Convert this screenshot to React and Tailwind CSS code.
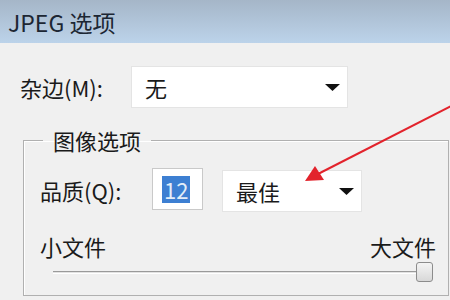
import React from 'react'

const DownArrow = () => (
    <svg width="15" height="7" viewBox="0 0 15 7" className="shrink-0">
        <polygon points="0,0 15,0 7.5,7" fill="#111" />
    </svg>
)

const Combo = ({ value, className }) => (
    <div
        className={`flex items-center justify-between h-[42px] bg-white border border-[#e4e4e4] pl-[13px] pr-[7px] ${className}`}>
        <span>{value}</span>
        <DownArrow />
    </div>
)

export default function App() {
    return (
        <div className="relative w-[450px] h-[300px] overflow-hidden bg-[#f0f0f0] text-[22px] leading-[28px] text-[#1a1a1a] font-['Noto_Sans_CJK_SC',sans-serif]">
            {/* title bar */}
            <div className="h-[43px] flex items-center pl-[8px] bg-gradient-to-b from-[#a5b6c8] to-[#bcd3ea] text-[23px] text-[#1c2633]">
                JPEG 选项
            </div>

            {/* matte */}
            <div className="flex items-center mt-[23px] pl-[20px]">
                <span className="w-[111px]">杂边(M):</span>
                <Combo value="无" className="w-[217px]" />
            </div>

            {/* image options group */}
            <fieldset className="ml-[23px] mt-[18px] w-[426px] border border-[#b0b0b0] pl-[16px] pr-[12px] pt-[14px] pb-[13px] shadow-[inset_1px_1px_0_#ffffff]">
                <legend className="ml-[3px] px-[10px]">图像选项</legend>

                <div className="flex items-center h-[44px]">
                    <span className="w-[112px]">品质(Q):</span>
                    <div className="self-start flex items-center w-[51px] h-[42px] bg-white border border-[#c9c9c9] pl-[9px]">
                        <span className="h-[27px] px-[2px] flex items-center bg-[#3d7fd2] text-[#e3edf8]">
                            12
                        </span>
                    </div>
                    <Combo value="最佳" className="self-end ml-[19px] w-[140px]" />
                </div>

                <div className="flex justify-between mt-[20px]">
                    <span>小文件</span>
                    <span>大文件</span>
                </div>

                <div className="flex items-center h-[20px] mt-[2px] pl-[13px] pr-[3px]">
                    <div className="flex-1 h-[3px] border-t border-[#9a9a9a] bg-[#e2e2e2] border-b border-b-white" />
                    <div className="w-[17px] h-[20px] -ml-[4px] rounded-[3px] border border-[#8c8c8c] bg-gradient-to-b from-[#f4f4f4] to-[#d8d8d8]" />
                </div>
            </fieldset>

            {/* red annotation arrow */}
            <svg
                className="absolute left-0 top-0 pointer-events-none"
                width="450"
                height="300"
                viewBox="0 0 450 300">
                <line x1="451" y1="106" x2="316" y2="175" stroke="#e2232c" strokeWidth="2" />
                <polygon points="305,181 324,180 315,166" fill="#e2232c" />
            </svg>
        </div>
    )
}
